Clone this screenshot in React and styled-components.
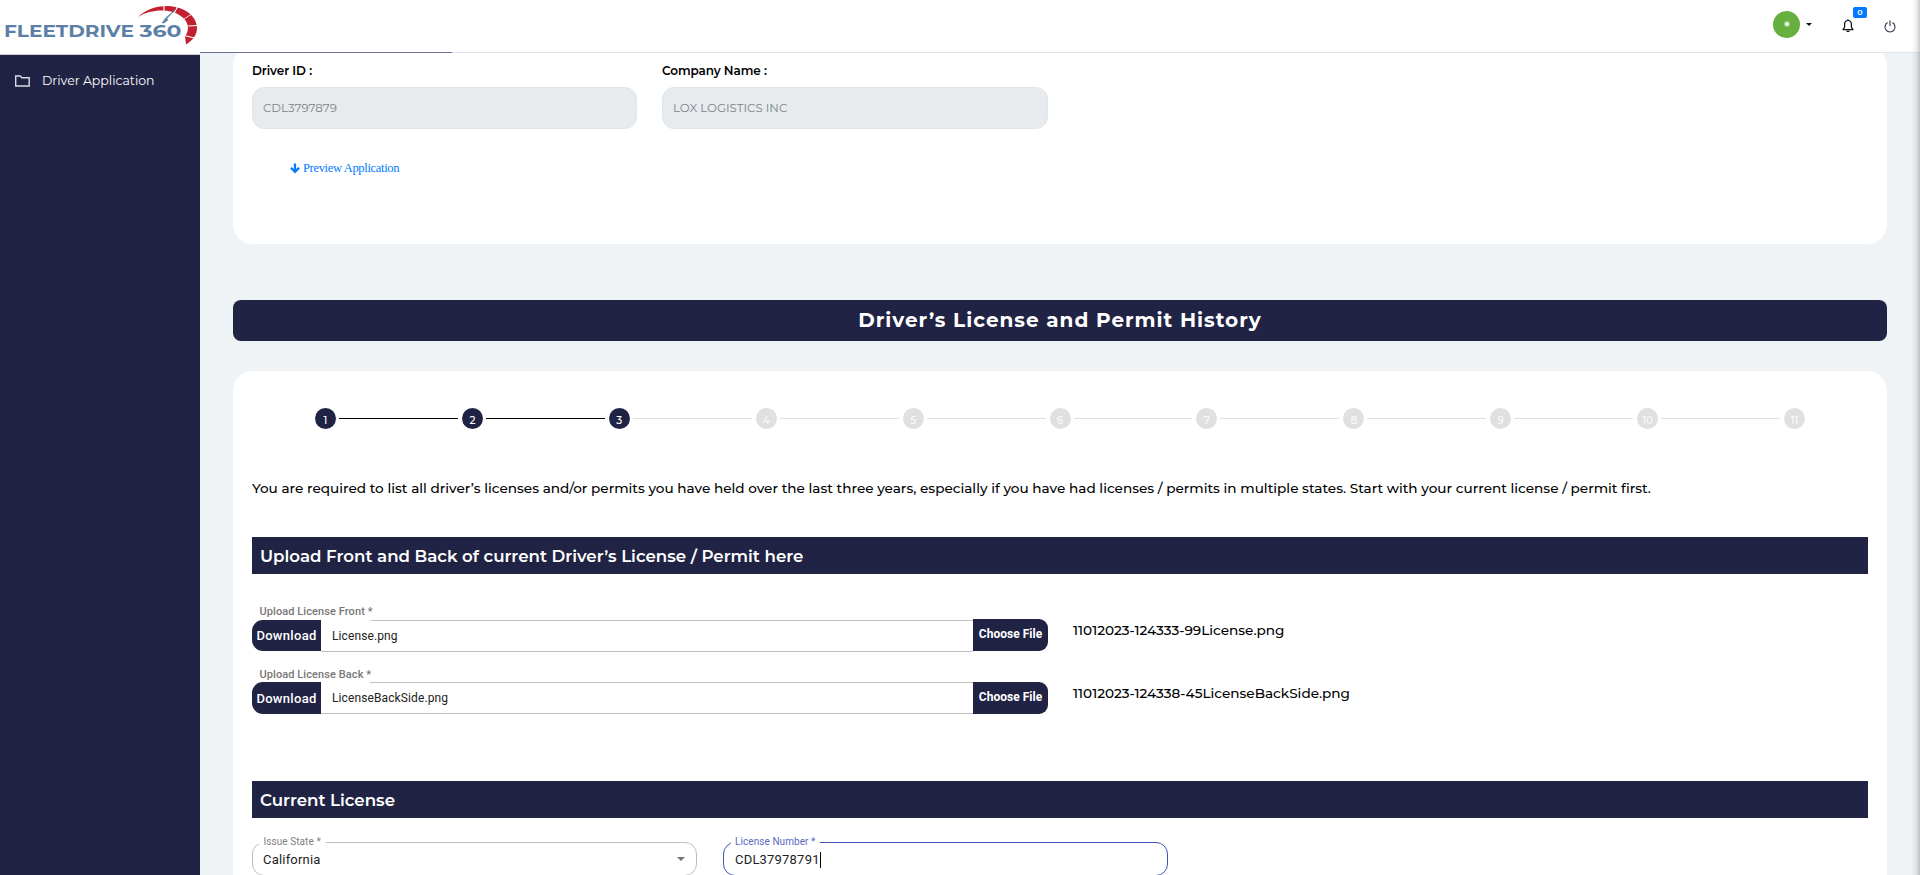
import React from "react";
import styled, { createGlobalStyle, css } from "styled-components";

const navy = "#212344";
const sans = 'Montserrat, Inter, "Liberation Sans", sans-serif';
const roboto = 'Roboto, "Liberation Sans", sans-serif';

const GlobalStyle = createGlobalStyle`
  *, *::before, *::after { box-sizing: border-box; }
  body { margin: 0; background: #eff3f6; font-family: ${sans}; color: #000; overflow: hidden; }
`;

const Shell = styled.div`
  display: flex;
  height: 875px;
  overflow: hidden;
  background: #eff3f6;
`;

/* Sidebar */
const Sidebar = styled.aside`
  flex: 0 0 200px;
  display: flex;
  flex-direction: column;
  background: ${navy};
`;
const Brand = styled.div`
  height: 55px;
  background: #fff;
  border-bottom: 1px solid #d0d0d3;
`;
const NavItem = styled.a`
  display: flex;
  align-items: center;
  gap: 12px;
  height: 51px;
  padding-left: 15px;
  color: #fff;
  font-size: 12.48px;
  svg { display: block; }
`;

/* Top bar */
const Main = styled.main`
  flex: 1;
  min-width: 0;
`;
const TopBar = styled.header`
  position: relative;
  z-index: 2;
  display: flex;
  flex-direction: column;
  height: 53px;
  background: #fff;
`;
const Actions = styled.div`
  flex: 1;
  display: flex;
  align-items: flex-start;
  justify-content: flex-end;
  padding: 10.5px 24px 0 0;
`;
const Progress = styled.div`
  height: 1px;
  background: #dfe4e9;
`;
const ProgressFill = styled.div`
  width: 252px;
  height: 1px;
  background: #6e70a0;
`;
const Avatar = styled.div`
  display: flex;
  align-items: center;
  justify-content: center;
  width: 27px;
  height: 27px;
  border-radius: 50%;
  background: #67b03f;
`;
const Caret = styled.span`
  margin: 12.5px 30px 0 6px;
  border: 3px solid transparent;
  border-top-color: #111;
  border-bottom: 0;
`;
const BellWrap = styled.div`
  position: relative;
  width: 12px;
  margin: 8.5px 30px 0 0;
  svg { display: block; }
`;
const Badge = styled.span`
  position: absolute;
  left: 11px;
  top: -12px;
  width: 14px;
  height: 11px;
  border-radius: 2px;
  background: #007bff;
  color: #fff;
  font-size: 8px;
  font-weight: 600;
  line-height: 10px;
  text-align: center;
`;
const Power = styled.div`
  margin-top: 9px;
  svg { display: block; }
`;

/* Page */
const Content = styled.div`
  margin-top: -7px;
  padding: 0 33px;
`;
const Card = styled.section`
  background: #fff;
  border-radius: 20px;
  padding: 0 19px;
`;
const ProfileCard = styled(Card)`
  height: 198px;
  padding-top: 16px;
`;
const FieldRow = styled.div`
  display: flex;
  gap: ${(p) => p.$gap}px;
`;
const ReadOnly = styled.label`
  width: ${(p) => p.$width}px;
  font-size: 12px;
  font-weight: 600;
  line-height: 17px;
  letter-spacing: -0.08px;
`;
const ReadOnlyBox = styled.div`
  display: flex;
  align-items: center;
  height: 42px;
  margin-top: 8px;
  padding-left: 10px;
  border: 1px solid #e1e6eb;
  border-radius: 12px;
  background: #e7ebee;
  color: #808388;
  font-size: 11.8px;
  font-weight: 400;
  line-height: 15px;
  letter-spacing: 0;
`;
const PreviewLink = styled.a`
  display: inline-flex;
  align-items: center;
  gap: 3px;
  margin: 31px 0 0 38px;
  color: #007bff;
  font: 12.5px/16px "Liberation Serif", "Times New Roman", serif;
  letter-spacing: -0.33px;
`;
const Banner = styled.h1`
  display: flex;
  align-items: center;
  justify-content: center;
  height: 41px;
  margin: 56px 0 30px;
  border-radius: 8px;
  background: ${navy};
  color: #fff;
  font-size: 20px;
  font-weight: 700;
  line-height: 25px;
  letter-spacing: 1px;
`;
const FormCard = styled(Card)`
  height: 540px;
  padding-top: 37px;
`;

/* Stepper */
const Stepper = styled.div`
  display: flex;
  align-items: center;
  height: 21px;
  padding: 0 63px;
`;
const StepDot = styled.span`
  flex: 0 0 21px;
  display: flex;
  align-items: center;
  justify-content: center;
  height: 21px;
  padding-top: 4px;
  border-radius: 50%;
  background: ${(p) => (p.$done ? navy : "#e0e0e0")};
  color: ${(p) => (p.$done ? "#fff" : "#fafafa")};
  font-size: 10.4px;
  font-weight: 500;
  line-height: 12px;
`;
const StepLine = styled.span`
  flex: 1;
  height: 1px;
  margin: 0 4px 0 3px;
  background: ${(p) => (p.$done ? "#000" : "#e0e0e0")};
`;

const Intro = styled.p`
  margin: 49px 0 38px;
  font-size: 13.6px;
  font-weight: 500;
  line-height: 21px;
  letter-spacing: 0.005px;
  white-space: nowrap;
`;
const SectionBar = styled.h2`
  display: flex;
  align-items: center;
  height: 37px;
  margin: ${(p) => p.$top || 0}px 0 0;
  padding: 1px 0 0 8px;
  background: ${navy};
  color: #fff;
  font-size: 16.64px;
  font-weight: 600;
  line-height: 20px;
`;

/* Uploads */
const UploadList = styled.div`
  display: flex;
  flex-direction: column;
  gap: 16px;
  margin-top: 31px;
`;
const UploadRow = styled.div`
  display: flex;
  gap: 25px;
`;
const UploadField = styled.div`
  width: 796px;
`;
const UploadLabel = styled.div`
  height: 14px;
  margin-bottom: ${(p) => (p.$first ? 1 : 0)}px;
  padding-left: 7.5px;
  color: #777;
  font: 500 11px/14px ${roboto};
  letter-spacing: 0.08px;
`;
const UploadBox = styled.div`
  display: flex;
  height: 32px;
`;
const fileButton = css`
  display: flex;
  align-items: center;
  justify-content: center;
  background: ${navy};
  color: #fff;
  white-space: nowrap;
`;
const DownloadButton = styled.div`
  ${fileButton}
  width: 69px;
  height: ${(p) => (p.$first ? 31 : 32)}px;
  border-radius: 11px 0 0 11px;
  font: 500 13px/15px ${roboto};
  letter-spacing: 0.3px;
`;
const ChooseButton = styled.div`
  ${fileButton}
  width: 75px;
  height: 32px;
  margin-top: ${(p) => (p.$first ? -1 : 0)}px;
  padding: 0 0 2px;
  border-radius: 0 9px 9px 0;
  font: 700 12px/14px ${roboto};
  letter-spacing: 0.03px;
`;
const FileValue = styled.div`
  flex: 1;
  display: flex;
  flex-direction: column;
  border-bottom: 1px solid #c0c0c0;
  color: #222;
  font: 400 12px/30px ${roboto};
  letter-spacing: 0.11px;
`;
const NotchedLine = styled.span`
  height: 1px;
  margin-left: ${(p) => p.$notch}px;
  background: #c0c0c0;
`;
const FileText = styled.span`
  padding-left: 11px;
`;
const StoredName = styled.div`
  padding-top: 15px;
  font-size: 13.6px;
  font-weight: 500;
  line-height: 20px;
`;

/* Outlined inputs */
const OutlinedRow = styled(FieldRow)`
  margin-top: 24px;
`;
const Outlined = styled.div`
  position: relative;
  display: flex;
  align-items: center;
  width: 445px;
  height: 34px;
  padding: ${(p) => (p.$active ? "1px 11px 0" : "0 11px 0 10px")};
  border: 1px solid ${(p) => (p.$active ? "#3f51b5" : "#bdbdbd")};
  border-radius: 12px;
  color: #222;
  font: 400 13px/15px ${roboto};
  letter-spacing: 0.2px;
`;
const OutlinedLabel = styled.span`
  position: absolute;
  top: -7px;
  left: ${(p) => (p.$active ? 7 : 6)}px;
  padding: 0 5px 0 ${(p) => (p.$active ? 4 : 4.5)}px;
  background: #fff;
  color: ${(p) => (p.$active ? "#5a69c0" : "#808080")};
  font-size: 10px;
  line-height: 12px;
  letter-spacing: 0.07px;
`;
const SelectArrow = styled.span`
  margin-left: auto;
  border: 4.5px solid transparent;
  border-top-color: #757575;
  border-bottom: 0;
`;
const TextCursor = styled.span`
  width: 1px;
  height: 16px;
  background: #000;
`;
const EdgeShadow = styled.div`
  position: fixed;
  z-index: 3;
  top: 0;
  right: 0;
  bottom: 0;
  width: 9px;
  background: linear-gradient(to right, rgba(0, 0, 0, 0), rgba(0, 0, 0, 0.05) 50%, rgba(0, 0, 0, 0.2));
`;

function Logo() {
  return (
    <svg width="200" height="54" viewBox="0 0 200 54">
      <g fill="#5b7fa6" fontFamily={sans} fontWeight="700" fontSize="15.5">
        <text x="4" y="36.6" textLength="130" lengthAdjust="spacingAndGlyphs">FLEETDRIVE</text>
        <text x="139.5" y="36.6" textLength="42" lengthAdjust="spacingAndGlyphs">360</text>
      </g>
      <path
        d="M138 17C146 9 157 6 168 6C186 7 197 17 197 28C197 35 193 40 186 44.500L185 36.500C190 30 189 21 180 15.500C170 8.500 151 9 138 17Z"
        fill="#c3202f"
      />
      <path d="M164 4v8M178 6l-5 9M197 25.500l-9 .5M197 38.500l-13-3" stroke="#fff" strokeWidth="1.100" />
      <path d="M191 14.500l-8 5" stroke="#fff" strokeWidth=".8" />
      <path d="M176 9l-9 9.500 1 1.500-4 3h-2l4-5.500z" fill="#5b7fa6" stroke="#5b7fa6" strokeWidth=".5" />
    </svg>
  );
}

const FolderIcon = () => (
  <svg width="15" height="12" viewBox="0 0 15 12" fill="none" stroke="#d9dae2" strokeWidth="1.400">
    <path d="M.7 1h4.600l1.500 1.700h7.400v8.300H.7z" />
  </svg>
);
const BellIcon = () => (
  <svg width="12" height="14" viewBox="0 0 12 14" fill="none" stroke="#111" strokeWidth="1.200">
    <path d="M6 1.500C3.700 1.500 2.600 3.200 2.600 5v3.200L1 10.600h10L9.400 8.200V5C9.400 3.200 8.300 1.500 6 1.500z" strokeLinejoin="round" />
    <path d="M6 .3v1.200M4.700 11.700c.2 1.200 2.400 1.200 2.600 0" />
  </svg>
);
const PowerIcon = () => (
  <svg width="12" height="13" viewBox="0 0 12 13" fill="none" stroke="#343250" strokeWidth="1.100">
    <path d="M3.600 2.600a5 5 0 1 0 4.800 0M6 .5v5.500" />
  </svg>
);
const StarIcon = () => (
  <svg width="8" height="8" viewBox="0 0 8 8" stroke="#e8f4e2" strokeWidth="1">
    <path d="M4 1v6M1 4h6M1.900 1.900l4.200 4.200M6.100 1.900L1.900 6.100" />
    <circle cx="4" cy="4" r="1.500" fill="#fff" stroke="none" />
  </svg>
);
const DownArrowIcon = () => (
  <svg width="10" height="11" viewBox="0 0 10 11" fill="none" stroke="#007bff" strokeWidth="2.300">
    <path d="M5 .5v8.500M.9 4.700L5 8.800l4.100-4.100" />
  </svg>
);

const steps = [1, 2, 3, 4, 5, 6, 7, 8, 9, 10, 11];
const currentStep = 3;

const uploads = [
  { label: "Upload License Front *", file: "License.png", stored: "11012023-124333-99License.png", notch: 50 },
  { label: "Upload License Back *", file: "LicenseBackSide.png", stored: "11012023-124338-45LicenseBackSide.png", notch: 49 },
];

export default function App() {
  return (
    <>
      <GlobalStyle />
      <Shell>
        <Sidebar>
          <Brand><Logo /></Brand>
          <NavItem><FolderIcon />Driver Application</NavItem>
        </Sidebar>
        <Main>
          <TopBar>
            <Actions>
              <Avatar><StarIcon /></Avatar>
              <Caret />
              <BellWrap><BellIcon /><Badge>0</Badge></BellWrap>
              <Power><PowerIcon /></Power>
            </Actions>
            <Progress><ProgressFill /></Progress>
          </TopBar>
          <Content>
            <ProfileCard>
              <FieldRow $gap={25}>
                <ReadOnly $width={385}>Driver ID :<ReadOnlyBox>CDL3797879</ReadOnlyBox></ReadOnly>
                <ReadOnly $width={386}>Company Name :<ReadOnlyBox>LOX LOGISTICS INC</ReadOnlyBox></ReadOnly>
              </FieldRow>
              <PreviewLink><DownArrowIcon />Preview Application</PreviewLink>
            </ProfileCard>
            <Banner>Driver’s License and Permit History</Banner>
            <FormCard>
              <Stepper>
                {steps.map((n) => (
                  <React.Fragment key={n}>
                    {n > 1 && <StepLine $done={n <= currentStep} />}
                    <StepDot $done={n <= currentStep}>{n}</StepDot>
                  </React.Fragment>
                ))}
              </Stepper>
              <Intro>
                You are required to list all driver’s licenses and/or permits you have held over the last three years, especially if you have had licenses / permits in multiple states. Start with your current license / permit first.
              </Intro>
              <SectionBar>Upload Front and Back of current Driver’s License / Permit here</SectionBar>
              <UploadList>
                {uploads.map((u, i) => (
                  <UploadRow key={u.label}>
                    <UploadField>
                      <UploadLabel $first={i === 0}>{u.label}</UploadLabel>
                      <UploadBox>
                        <DownloadButton $first={i === 0}>Download</DownloadButton>
                        <FileValue>
                          <NotchedLine $notch={u.notch} />
                          <FileText>{u.file}</FileText>
                        </FileValue>
                        <ChooseButton $first={i === 0}>Choose File</ChooseButton>
                      </UploadBox>
                    </UploadField>
                    <StoredName>{u.stored}</StoredName>
                  </UploadRow>
                ))}
              </UploadList>
              <SectionBar $top={67}>Current License</SectionBar>
              <OutlinedRow $gap={26}>
                <Outlined>
                  <OutlinedLabel>Issue State *</OutlinedLabel>
                  California
                  <SelectArrow />
                </Outlined>
                <Outlined $active>
                  <OutlinedLabel $active>License Number *</OutlinedLabel>
                  CDL37978791
                  <TextCursor />
                </Outlined>
              </OutlinedRow>
            </FormCard>
          </Content>
        </Main>
      </Shell>
      <EdgeShadow />
    </>
  );
}
